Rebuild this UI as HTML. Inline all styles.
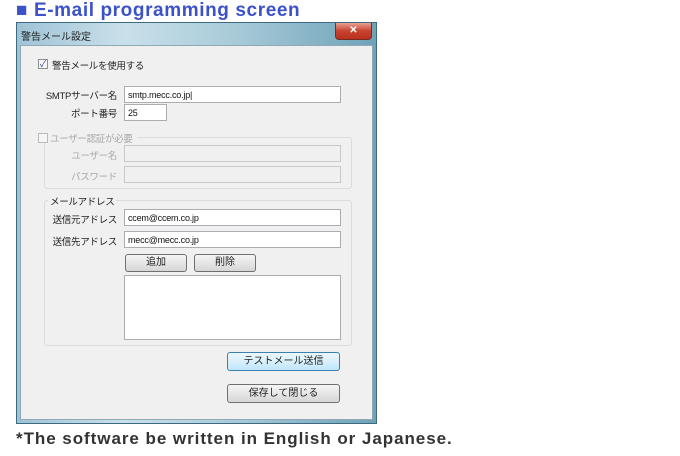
<!DOCTYPE html>
<html><head><meta charset="utf-8"><style>
*{margin:0;padding:0;box-sizing:border-box}
body{width:680px;height:456px;background:#fff;position:relative;overflow:hidden;font-family:"Liberation Sans","Noto Sans CJK JP",sans-serif}
.a{position:absolute}
.h{left:16px;top:0;font-size:19px;font-weight:bold;color:#3b52c9;white-space:nowrap;letter-spacing:0.6px}
.win{left:16px;top:22px;width:361px;height:402px;border:1px solid #3c6a80;background:linear-gradient(90deg,#9fc3d6,#c9e0ea 30%,#a9cbd9 60%,#6fa2b8);}
.title{left:4px;top:5px;font-size:10px;color:#222}
.close{left:318px;top:0px;width:37px;height:17px;border:1px solid #7a2a22;border-top:none;border-radius:0 0 4px 4px;background:linear-gradient(#e8a090,#c8432e 50%,#b83220);color:#fff;font-size:10px;font-weight:bold;text-align:center;line-height:15px}
.t{font-size:9.5px;color:#222;white-space:nowrap;letter-spacing:-0.3px}
.g{color:#a8a8a8}
.in{background:#fff;border:1px solid #abadb3;height:17px;font-size:9px;padding:3px 3px;color:#111;letter-spacing:-0.2px}
.dis{background:#f0f0f0;border-color:#c8c8c8}
.grp{border:1px solid #dcdcdc;border-radius:3px}
.btn{border:1px solid #707070;border-radius:3px;background:linear-gradient(#f4f4f4,#e6e6e6 50%,#d6d6d6);font-size:10px;text-align:center;color:#222}
.cb{width:10px;height:10px;border:1px solid #8e8f8f;background:#f6f6f6}
</style></head><body>
<div class="a h">■ E-mail programming screen</div>
<div class="a win">
 <div class="a title">警告メール設定</div>
 <div class="a close">✕</div>
</div>
<div class="a" style="left:20px;top:45px;width:353px;height:375px;background:#f0f0f0;border:1px solid #8fa9b6"></div>
<div class="a cb" style="left:38px;top:59px;font-size:9px;line-height:8px;color:#2a4a8a;text-align:center">✓</div>
<div class="a t" style="left:52px;top:58px">警告メールを使用する</div>
<div class="a t" style="left:36px;top:88px;width:81px;text-align:right">SMTPサーバー名</div>
<div class="a in" style="left:124px;top:86px;width:217px">smtp.mecc.co.jp|</div>
<div class="a t" style="left:36px;top:106px;width:81px;text-align:right">ポート番号</div>
<div class="a in" style="left:124px;top:104px;width:43px">25</div>
<div class="a grp" style="left:44px;top:137px;width:308px;height:52px"></div>
<div class="a" style="left:37px;top:130px;width:100px;height:12px;background:#f0f0f0"></div>
<div class="a cb" style="left:38px;top:133px;border-color:#bbb"></div>
<div class="a t g" style="left:50px;top:131px">ユーザー認証が必要</div>
<div class="a t g" style="left:36px;top:148px;width:81px;text-align:right">ユーザー名</div>
<div class="a in dis" style="left:124px;top:145px;width:217px"></div>
<div class="a t g" style="left:36px;top:169px;width:81px;text-align:right">パスワード</div>
<div class="a in dis" style="left:124px;top:166px;width:217px"></div>
<div class="a grp" style="left:44px;top:200px;width:308px;height:146px"></div>
<div class="a t" style="left:48px;top:194px;background:#f0f0f0;padding:0 2px">メールアドレス</div>
<div class="a t" style="left:36px;top:212px;width:81px;text-align:right">送信元アドレス</div>
<div class="a in" style="left:124px;top:209px;width:217px">ccem@ccem.co.jp</div>
<div class="a t" style="left:36px;top:234px;width:81px;text-align:right">送信先アドレス</div>
<div class="a in" style="left:124px;top:231px;width:217px">mecc@mecc.co.jp</div>
<div class="a btn" style="left:125px;top:254px;width:62px;height:18px;line-height:16px">追加</div>
<div class="a btn" style="left:194px;top:254px;width:62px;height:18px;line-height:16px">削除</div>
<div class="a in" style="left:124px;top:275px;width:217px;height:65px"></div>
<div class="a btn" style="left:227px;top:352px;width:113px;height:19px;line-height:17px;border-color:#3c7fb1;background:linear-gradient(#eaf6fd,#d9f0fc 50%,#bee6fd)">テストメール送信</div>
<div class="a btn" style="left:227px;top:384px;width:113px;height:19px;line-height:17px">保存して閉じる</div>
<div class="a" style="left:16px;top:429px;font-size:17px;font-weight:bold;color:#333;white-space:nowrap;letter-spacing:0.95px">*The software be written in English or Japanese.</div>
</body></html>
